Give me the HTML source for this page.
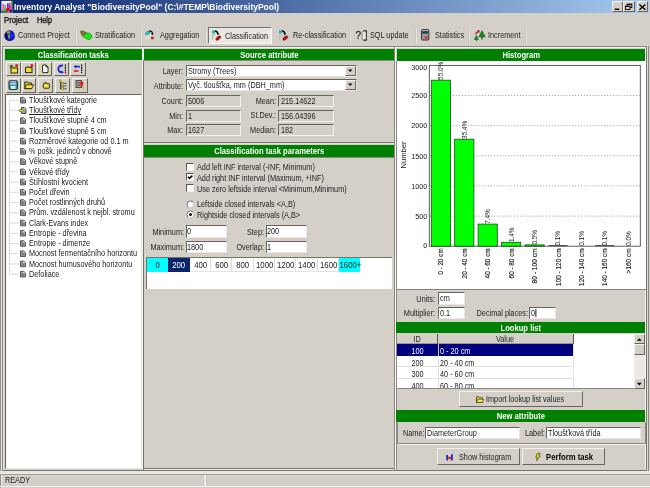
<!DOCTYPE html>
<html><head><meta charset="utf-8"><title>Inventory Analyst</title>
<style>
html,body{margin:0;padding:0;}
body{width:650px;height:488px;overflow:hidden;background:#d4d0c8;position:relative;
 font-family:"Liberation Sans","DejaVu Sans",sans-serif;font-size:9px;color:#222;line-height:11px;}
div,span{position:absolute;box-sizing:border-box;white-space:nowrap;}
.t{height:11px;line-height:11px;font-size:8.2px;transform:scaleX(.89);transform-origin:0 50%;}
.t.r{text-align:right;transform-origin:100% 50%;}
.t.c{text-align:center;transform-origin:50% 50%;}
.c{text-align:center;}
.hdr i{font-style:normal;display:inline-block;position:static;transform:scaleX(.93);transform-origin:50% 50%;}
.inp i{font-style:normal;display:inline-block;position:static;transform:scaleX(.89);transform-origin:0 50%;}
.hdr{background:#008000;color:#fff;font-weight:bold;text-align:center;height:12px;line-height:13.4px;font-size:8.2px;}
.sunk{border:1px solid;border-width:1.3px 1px 1px 1.3px;border-color:#66645e #f4f3f0 #f4f3f0 #66645e;}
.sunkw{background:#fff;border:1px solid;border-width:1.3px 1px 1px 1.3px;border-color:#66645e #e9e7e3 #e9e7e3 #66645e;}
.rais{border:1px solid;border-color:#f8f7f5 #68665f #68665f #f8f7f5;}
.frame{border:1px solid;border-color:#8a8880 #fbfaf9 #fbfaf9 #8a8880;}
.btn{border:1px solid;border-color:#f3f2ef #67655f #67655f #f3f2ef;background:#d4d0c8;}
.inp{padding-left:1.5px;line-height:11.2px;font-size:8.2px;}
svg{position:absolute;overflow:visible;}
</style></head><body><div id="w" style="left:0;top:0;width:650px;height:488px;will-change:transform;">

<div class="" style="left:0px;top:0px;width:650px;height:12.6px;background:linear-gradient(90deg,#0a246a 0%,#a6caf0 100%);"></div>
<div class="" style="left:648.5px;top:0px;width:1.5px;height:13px;background:#d4d0c8;"></div>
<svg style="left:0px;top:0px" width="14" height="13" viewBox="0 0 14 13">
<rect x="1.4" y="0.9" width="11.5" height="11.6" fill="#ecebf0"/>
<rect x="1.4" y="10.4" width="6" height="2.1" fill="#1c7c24"/>
<rect x="11.5" y="0.9" width="1.4" height="8.6" fill="#146c1c"/>
<rect x="2.4" y="3.8" width="1.7" height="6.4" fill="#e060d0"/>
<rect x="4.5" y="5" width="1.2" height="5.6" fill="#20a028"/>
<rect x="7" y="3.4" width="1.7" height="4.8" fill="#2434c0"/>
<rect x="9.1" y="2.6" width="1.6" height="3.6" fill="#e04848"/>
<rect x="9.4" y="9.4" width="3.2" height="3" fill="#141480"/>
<circle cx="9.4" cy="7.2" r="1.9" fill="#f010e0"/>
<circle cx="7.8" cy="9.8" r="2" fill="#f00014"/>
</svg>
<div class="t " style="left:14.2px;top:2.1px;color:#fff;font-weight:bold;font-size:8.9px;transform:scaleX(.956);">Inventory Analyst "BiodiversityPool" (C:\#TEMP\BiodiversityPool)</div>
<div class="btn" style="left:612.4px;top:1.4px;width:10.8px;height:10.4px;"></div>
<div class="btn" style="left:623.2px;top:1.4px;width:12.2px;height:10.4px;"></div>
<div class="btn" style="left:637px;top:1.4px;width:11.2px;height:10.4px;"></div>
<svg style="left:612px;top:0px" width="38" height="13" viewBox="0 0 38 13">
<rect x="2.7" y="8.5" width="4.6" height="1.5" fill="#000"/>
<rect x="15.2" y="4.2" width="4.6" height="3.4" fill="none" stroke="#000" stroke-width="0.9"/>
<rect x="15.2" y="3.9" width="4.6" height="1" fill="#000"/>
<rect x="13.4" y="6.2" width="4.6" height="3.2" fill="#d4d0c8" stroke="#000" stroke-width="0.9"/>
<rect x="13.4" y="5.9" width="4.6" height="1" fill="#000"/>
<path d="M27.4 4.4 L33.4 9.8 M33.4 4.4 L27.4 9.8" stroke="#000" stroke-width="1.4" fill="none"/>
</svg>
<div class="t " style="left:4px;top:15px;color:#000;-webkit-text-stroke:0.25px #000;transform:scaleX(.95);">Project</div>
<div class="t " style="left:37px;top:15px;color:#000;-webkit-text-stroke:0.25px #000;">Help</div>
<div class="t " style="left:18px;top:30px;">Connect Project</div>
<div class="" style="left:75px;top:29px;width:2px;height:15px;border-left:1px solid #c9c6be;border-right:1px solid #e6e4df;"></div>
<div class="t " style="left:94.7px;top:30px;">Stratification</div>
<div class="" style="left:140px;top:29px;width:2px;height:15px;border-left:1px solid #c9c6be;border-right:1px solid #e6e4df;"></div>
<div class="t " style="left:160px;top:30px;">Aggregation</div>
<div class="" style="left:205px;top:29px;width:2px;height:15px;border-left:1px solid #c9c6be;border-right:1px solid #e6e4df;"></div>
<div class="" style="left:207.5px;top:27.3px;width:64px;height:17px;border:1px solid;border-color:#77746d #fbfaf9 #fbfaf9 #77746d;background:#e9e7e2;"></div>
<div class="t " style="left:225px;top:30.5px;">Classification</div>
<div class="t " style="left:292.5px;top:30px;">Re-classification</div>
<div class="" style="left:349px;top:29px;width:2px;height:15px;border-left:1px solid #c9c6be;border-right:1px solid #e6e4df;"></div>
<div class="t " style="left:355.6px;top:29.8px;font-size:10px;color:#222;transform:none;-webkit-text-stroke:0.2px #222;">?</div>
<svg style="left:361px;top:29.5px" width="6.4" height="11" viewBox="0 0 6.4 11"><path d="M1.2 2.4 Q1.2 0.8 3.4 0.8 L5.4 0.8 L5.4 10.2 L3.4 10.2 Q1.2 10.2 1.2 8.6 Z" fill="#ecebe8" stroke="#555" stroke-width="0.6"/><path d="M5.3 1 L5.3 10" stroke="#111" stroke-width="0.9" stroke-dasharray="2.6 0.7"/><path d="M2.4 1 Q3.8 0.4 5.6 0.9 M2.4 10 Q3.8 10.6 5.6 10.1" stroke="#000" stroke-width="0.9" fill="none"/></svg>
<div class="t " style="left:370px;top:30px;">SQL update</div>
<div class="" style="left:415px;top:29px;width:2px;height:15px;border-left:1px solid #c9c6be;border-right:1px solid #e6e4df;"></div>
<div class="t " style="left:434.5px;top:30px;">Statistics</div>
<div class="" style="left:468px;top:29px;width:2px;height:15px;border-left:1px solid #c9c6be;border-right:1px solid #e6e4df;"></div>
<div class="t " style="left:488px;top:30px;">Increment</div>
<div class="" style="left:525px;top:29px;width:2px;height:15px;border-left:1px solid #c9c6be;border-right:1px solid #e6e4df;"></div>
<svg style="left:3.8px;top:29.5px" width="11.4" height="11.4" viewBox="0 0 11.4 11.4">
<defs><radialGradient id="gl" cx="0.68" cy="0.5" r="0.6"><stop offset="0" stop-color="#1838ff"/><stop offset="0.6" stop-color="#0a10c8"/><stop offset="1" stop-color="#060a70"/></radialGradient></defs>
<circle cx="5.7" cy="5.7" r="5.4" fill="url(#gl)"/>
<path d="M2.6 1.8 L4.2 1 L6.4 1.4 L6.2 3 L5 3.6 L4.2 4.4 L3 3.6 Z" fill="#9a9a20"/>
<path d="M3.8 4.8 L5.8 4.6 L6.2 6.4 L5.6 8.6 L4.8 9.4 L4.2 7.4 Z" fill="#9a9a20"/>
<path d="M9.8 2.8 L10.8 4.2 L10.9 6 L10 5.4 Z" fill="#8a8a28"/>
</svg>
<svg style="left:80px;top:30px" width="13" height="11" viewBox="0 0 13 11">
<path d="M0.3 1.4 L2.8 0.8 L7 3.2 L5.2 6 L2 5.6 Z" fill="#8a7a20" stroke="#3a4a10" stroke-width="0.6"/>
<path d="M3.4 6 Q4 3.5 7 3 Q10 2.5 11.5 5 Q12.4 7.5 10.5 9 Q8.5 10.2 7 9 Q5.6 7.6 4 7.6 Q3.2 7 3.4 6 Z" fill="#10ec10" stroke="#0a6a0a" stroke-width="0.6"/>
</svg>
<svg style="left:420.8px;top:29.3px" width="8.4" height="11.6" viewBox="0 0 8.4 11.6">
<rect x="0.5" y="0.5" width="7.4" height="10.6" rx="1.2" fill="#8e9898" stroke="#2a2a30" stroke-width="0.9"/>
<rect x="1.4" y="1.2" width="5.6" height="0.9" fill="#c4cccc"/>
<rect x="1.5" y="2.2" width="5.4" height="2.3" rx="0.6" fill="#0c2424"/>
<rect x="3.4" y="2.6" width="3" height="1.4" fill="#285050"/>
<rect x="1.6" y="5.4" width="5.2" height="1" fill="#a4acac"/>
<rect x="3.8" y="7.2" width="3.2" height="3.2" fill="#e04060"/>
</svg>
<svg style="left:473.5px;top:29.8px" width="12" height="11" viewBox="0 0 12 11">
<path d="M8 0.4 L11.4 7 L4.7 7 Z" fill="#0c8c14" stroke="#0a5a0e" stroke-width="0.4"/>
<rect x="7.5" y="7" width="1" height="2.4" fill="#101010"/>
<path d="M2.4 5.2 L4.6 9.4 L0.2 9.4 Z" fill="#0c8c14" stroke="#0a5a0e" stroke-width="0.4"/>
<rect x="1.9" y="9.4" width="1" height="1.4" fill="#103010"/>
<path d="M1.3 4 L3.8 2" stroke="#a01010" stroke-width="1.1"/>
<rect x="3.2" y="0.3" width="2.4" height="2.2" fill="#d01020"/>
</svg>

<svg style="left:145.3px;top:29.6px" width="11" height="11" viewBox="0 0 11 11">
<path d="M0.6 5 L5 2.4 L5.4 9.6 L0.6 9.6 Z" fill="#dddbd6"/>
<ellipse cx="2.9" cy="2.9" rx="3.1" ry="1.8" transform="rotate(-35 2.9 2.9)" fill="#189898"/>
<ellipse cx="2.6" cy="3.2" rx="1.5" ry="0.8" transform="rotate(-35 2.6 3.2)" fill="#40d8d0"/>
<path d="M4.6 1.3 Q7.3 0.8 7.4 3.6" stroke="#000" stroke-width="1.2" fill="none"/>
<path d="M6 3.3 L8.8 3.3 L7.4 5.3 Z" fill="#000"/>
<rect x="6.1" y="6.8" width="2.5" height="2.4" fill="#c81010"/>
</svg>
<svg style="left:211px;top:30px" width="11" height="11" viewBox="0 0 11 11">
<path d="M0.6 3 L4.6 3 L1.6 10 L0.6 10 Z" fill="#c4c2bc"/>
<rect x="1" y="0.4" width="3" height="2.8" fill="#18b8b0"/>
<path d="M4 1 Q6.8 1.2 6.9 4" stroke="#000" stroke-width="1.3" fill="none"/>
<path d="M5.5 3.4 L8.2 3.4 L6.9 5.2 Z" fill="#000"/>
<ellipse cx="7.3" cy="8.1" rx="2.9" ry="1.5" transform="rotate(-38 7.3 8.1)" fill="#d01010" stroke="#500000" stroke-width="0.5"/>
</svg>
<svg style="left:277.6px;top:29.8px" width="11" height="11" viewBox="0 0 11 11">
<path d="M0.6 3 L4.6 3 L1.6 10 L0.6 10 Z" fill="#c4c2bc"/>
<rect x="1" y="0.4" width="3" height="2.8" fill="#18b8b0"/>
<path d="M4 1 Q6.8 1.2 6.9 4" stroke="#000" stroke-width="1.3" fill="none"/>
<path d="M5.5 3.4 L8.2 3.4 L6.9 5.2 Z" fill="#000"/>
<ellipse cx="7.3" cy="8.1" rx="2.9" ry="1.5" transform="rotate(-38 7.3 8.1)" fill="#d01010" stroke="#500000" stroke-width="0.5"/>
</svg>
<div class="" style="left:2px;top:46px;width:646px;height:1px;background:#8a8880;"></div>
<div class="" style="left:3px;top:47px;width:644px;height:1px;background:#f1f0ed;"></div>
<div class="" style="left:2px;top:470px;width:646px;height:1px;background:#77746d;"></div>
<div class="" style="left:2px;top:46px;width:1px;height:425px;background:#8a8880;"></div>
<div class="" style="left:3px;top:47px;width:1px;height:423px;background:#e6e4e0;"></div>
<div class="" style="left:142px;top:47px;width:1px;height:423px;background:#f4f3f0;"></div>
<div class="" style="left:143px;top:60px;width:1px;height:411px;background:#77746d;"></div>
<div class="" style="left:143px;top:47px;width:1px;height:13px;background:#e9e7e3;"></div>
<div class="" style="left:394px;top:47px;width:1px;height:424px;background:#8a8880;"></div>
<div class="" style="left:395px;top:47px;width:1px;height:423px;background:#f8f7f5;"></div>
<div class="" style="left:396px;top:61px;width:1px;height:409px;background:#8a8880;"></div>
<div class="" style="left:645px;top:47px;width:1px;height:423px;background:#f1f0ed;"></div>
<div class="" style="left:646px;top:46px;width:1px;height:425px;background:#77746d;"></div>
<div class="" style="left:647px;top:46px;width:1px;height:425px;background:#e0ddd8;"></div>
<div class="" style="left:648px;top:46px;width:1px;height:425px;background:#8a8880;"></div>
<div class="" style="left:0px;top:13px;width:1px;height:475px;background:#96938c;"></div>
<div class="" style="left:1px;top:13px;width:1px;height:475px;background:#e6e4e0;"></div>
<div class="hdr" style="left:4.5px;top:49px;width:137px;height:11.3px;"><i>Classification tasks</i></div>
<div class="btn" style="left:5.8px;top:61.8px;width:14.8px;height:14.5px;"></div>
<div class="btn" style="left:21.2px;top:61.8px;width:14.8px;height:14.5px;"></div>
<div class="btn" style="left:37.4px;top:61.8px;width:14.8px;height:14.5px;"></div>
<div class="btn" style="left:54.4px;top:61.8px;width:14.8px;height:14.5px;"></div>
<div class="btn" style="left:70.2px;top:61.8px;width:15.6px;height:14.5px;"></div>
<div class="btn" style="left:6px;top:78.1px;width:14.8px;height:14.5px;"></div>
<div class="btn" style="left:21.6px;top:78.1px;width:14.8px;height:14.5px;"></div>
<div class="btn" style="left:38px;top:78.1px;width:14.8px;height:14.5px;"></div>
<div class="btn" style="left:54.8px;top:78.1px;width:14.8px;height:14.5px;"></div>
<div class="btn" style="left:71.5px;top:78.1px;width:16.2px;height:14.5px;"></div>
<svg style="left:7.80px;top:63.00px" width="12" height="12" viewBox="0 0 12 12"><rect x="3" y="5" width="6.6" height="5" fill="#e8e040" stroke="#201800" stroke-width="0.9"/><path d="M3 5 L4 4 L6 4 L6.6 5" fill="#e8e040" stroke="#201800" stroke-width="0.7"/><circle cx="8.6" cy="2.6" r="1.5" fill="#e81010"/><path d="M1.6 3 Q3 1 5 2.4 L4 4.4 L2 5 Z" fill="#4a5a30"/></svg>
<svg style="left:22.60px;top:63.00px" width="12" height="12" viewBox="0 0 12 12"><rect x="2.6" y="4.6" width="6.4" height="5" fill="#e8e040" stroke="#201800" stroke-width="0.9"/><path d="M2.6 4.6 L3.6 3.6 L5.6 3.6 L6.2 4.6" fill="#e8e040" stroke="#201800" stroke-width="0.7"/><circle cx="8.8" cy="2.6" r="1.5" fill="#e81010"/></svg>
<svg style="left:38.80px;top:63.00px" width="12" height="12" viewBox="0 0 12 12"><path d="M3.6 2 L7 2 L9 4 L9 9.6 L3.6 9.6 Z" fill="#fff" stroke="#181818" stroke-width="0.9"/><path d="M7 2 L7 4 L9 4" fill="none" stroke="#181818" stroke-width="0.7"/><g fill="#f0f040"><rect x="1.6" y="1" width="1.6" height="1.6"/><rect x="9.4" y="1" width="1.6" height="1.6"/><rect x="1.6" y="9.4" width="1.6" height="1.6"/><rect x="9.4" y="9.4" width="1.6" height="1.6"/><rect x="1.4" y="5" width="1.2" height="1.4"/><rect x="10" y="6" width="1.2" height="1.4"/></g></svg>
<svg style="left:56.40px;top:63.00px" width="12" height="12" viewBox="0 0 12 12"><path d="M7 2.6 Q2.4 2.2 2.4 5.8 Q2.4 9.4 6.2 9" stroke="#1828e0" stroke-width="1.9" fill="none"/><path d="M5.4 7.4 L8 9.2 L5.4 10.8 Z" fill="#1828e0"/><path d="M9.4 1.6 L9.4 9.4" stroke="#000" stroke-width="1.1" stroke-dasharray="1.6 0.9"/><rect x="8.8" y="8.6" width="1.4" height="1.8" fill="#e01010"/></svg>
<svg style="left:72.20px;top:63.00px" width="12" height="12" viewBox="0 0 12 12"><path d="M3.6 3.6 L8 3.6" stroke="#1828e0" stroke-width="1.5"/><path d="M1.6 3.6 L4.2 1.8 L4.2 5.4 Z" fill="#1828e0"/><path d="M2 8 L6.4 8" stroke="#e01010" stroke-width="1.5"/><path d="M9.6 1.6 L9.6 10" stroke="#000" stroke-width="1.2" stroke-dasharray="1.6 0.9"/></svg>
<svg style="left:7.40px;top:79.30px" width="12" height="12" viewBox="0 0 12 12"><rect x="2" y="1.8" width="8.4" height="8.6" rx="0.8" fill="#30a0a8" stroke="#101820" stroke-width="0.9"/><rect x="3.4" y="2.4" width="5.6" height="3" fill="#e8e8f0"/><rect x="3.4" y="3.4" width="5.6" height="0.8" fill="#5050c0"/><rect x="3.8" y="7" width="4.8" height="3" fill="#c8f0f0"/></svg>
<svg style="left:23.00px;top:79.30px" width="12" height="12" viewBox="0 0 12 12"><path d="M1.8 3 L4.4 3 L5.2 4 L8.6 4 L8.6 9.6 L1.8 9.6 Z" fill="#d8d038" stroke="#201800" stroke-width="0.9"/><path d="M1.8 9.6 L3.4 5.8 L10.8 5.8 L8.6 9.6 Z" fill="#f0e848" stroke="#201800" stroke-width="0.8"/></svg>
<svg style="left:40.20px;top:79.30px" width="12" height="12" viewBox="0 0 12 12"><rect x="3.4" y="4.6" width="6" height="4.6" rx="0.6" fill="#f0e848" stroke="#201800" stroke-width="0.9"/><path d="M3.6 4.6 L4.4 3.6 L6.2 3.6 L6.8 4.6" fill="#f0e848" stroke="#201800" stroke-width="0.7"/></svg>
<svg style="left:56.80px;top:79.30px" width="12" height="12" viewBox="0 0 12 12"><path d="M3.4 2 L3.4 10 M3.4 4.4 L9.6 4.4 M3.4 7 L9.6 7 M3.4 9.8 L9.6 9.8" stroke="#303030" stroke-width="0.8" fill="none"/><g fill="#e8e040" stroke="#403800" stroke-width="0.3"><rect x="2.4" y="1" width="2" height="2"/><rect x="4.4" y="3.6" width="1.8" height="1.8"/><rect x="4.4" y="6.2" width="1.8" height="1.8"/><rect x="4.4" y="8.8" width="1.8" height="1.8"/></g></svg>
<svg style="left:73.70px;top:79.30px" width="12" height="12" viewBox="0 0 12 12"><rect x="2" y="1.6" width="5.4" height="7" fill="#b0b0b0" stroke="#303030" stroke-width="0.8"/><path d="M3 3.4 L6.4 3.4 M3 5 L6.4 5 M3 6.6 L6.4 6.6" stroke="#404040" stroke-width="0.7"/><path d="M7.6 1.4 L10 4.6 L8.8 4.6 L8.8 7.4 L6.6 7.4 L6.6 4.6 L5.6 4.6 Z" fill="#e01010"/><path d="M4.6 9.4 L5.6 9.4 L5.6 11 M9 8 L9.8 8 L9.8 11" stroke="#c8c020" stroke-width="1" fill="none"/></svg>
<div class="sunkw" style="left:4.5px;top:94px;width:137px;height:375px;"></div>
<svg style="left:0;top:0" width="650" height="488"><g stroke="#d6d6d6" stroke-width="0.9" fill="none">
<path d="M9.5 100.4 L9.5 274.4"/>
<path d="M9.5 100.2 L19 100.2"/>
<path d="M9.5 110.4 L19 110.4"/>
<path d="M9.5 120.7 L19 120.7"/>
<path d="M9.5 130.9 L19 130.9"/>
<path d="M9.5 141.1 L19 141.1"/>
<path d="M9.5 151.4 L19 151.4"/>
<path d="M9.5 161.6 L19 161.6"/>
<path d="M9.5 171.8 L19 171.8"/>
<path d="M9.5 182.1 L19 182.1"/>
<path d="M9.5 192.3 L19 192.3"/>
<path d="M9.5 202.6 L19 202.6"/>
<path d="M9.5 212.8 L19 212.8"/>
<path d="M9.5 223.0 L19 223.0"/>
<path d="M9.5 233.3 L19 233.3"/>
<path d="M9.5 243.5 L19 243.5"/>
<path d="M9.5 253.7 L19 253.7"/>
<path d="M9.5 264.0 L19 264.0"/>
<path d="M9.5 274.2 L19 274.2"/>
</g>
<g transform="translate(20.1,97.00)"><path d="M0.4 0.4 L3.6 0.4 L5.4 2 L5.4 6 L0.4 6 Z" fill="#a4a4a4" stroke="#3c3c3c" stroke-width="0.8"/><path d="M3.4 0.8 L3.4 2.2 L5 2.2 Z" fill="#fff"/><path d="M1.4 2.2 L2.8 2.2 M1.4 3.4 L4.4 3.4 M1.4 4.6 L4.4 4.6" stroke="#505050" stroke-width="0.6"/></g>
<g transform="translate(19,107.04)"><path d="M2.4 0.4 L5.4 0.4 L7 2 L7 6.4 L2.4 6.4 Z" fill="#a4a4a4" stroke="#2c2c2c" stroke-width="0.8"/><path d="M5.2 0.8 L5.2 2.2 L6.6 2.2 Z" fill="#fff"/><path d="M0.2 2.8 L2.6 2.8 L2.6 1.4 L4.8 3.6 L2.6 5.8 L2.6 4.4 L0.2 4.4 Z" fill="#d8e030" stroke="#405010" stroke-width="0.5"/></g>
<g transform="translate(20.1,117.47)"><path d="M0.4 0.4 L3.6 0.4 L5.4 2 L5.4 6 L0.4 6 Z" fill="#a4a4a4" stroke="#3c3c3c" stroke-width="0.8"/><path d="M3.4 0.8 L3.4 2.2 L5 2.2 Z" fill="#fff"/><path d="M1.4 2.2 L2.8 2.2 M1.4 3.4 L4.4 3.4 M1.4 4.6 L4.4 4.6" stroke="#505050" stroke-width="0.6"/></g>
<g transform="translate(20.1,127.71)"><path d="M0.4 0.4 L3.6 0.4 L5.4 2 L5.4 6 L0.4 6 Z" fill="#a4a4a4" stroke="#3c3c3c" stroke-width="0.8"/><path d="M3.4 0.8 L3.4 2.2 L5 2.2 Z" fill="#fff"/><path d="M1.4 2.2 L2.8 2.2 M1.4 3.4 L4.4 3.4 M1.4 4.6 L4.4 4.6" stroke="#505050" stroke-width="0.6"/></g>
<g transform="translate(20.1,137.94)"><path d="M0.4 0.4 L3.6 0.4 L5.4 2 L5.4 6 L0.4 6 Z" fill="#a4a4a4" stroke="#3c3c3c" stroke-width="0.8"/><path d="M3.4 0.8 L3.4 2.2 L5 2.2 Z" fill="#fff"/><path d="M1.4 2.2 L2.8 2.2 M1.4 3.4 L4.4 3.4 M1.4 4.6 L4.4 4.6" stroke="#505050" stroke-width="0.6"/></g>
<g transform="translate(20.1,148.17)"><path d="M0.4 0.4 L3.6 0.4 L5.4 2 L5.4 6 L0.4 6 Z" fill="#a4a4a4" stroke="#3c3c3c" stroke-width="0.8"/><path d="M3.4 0.8 L3.4 2.2 L5 2.2 Z" fill="#fff"/><path d="M1.4 2.2 L2.8 2.2 M1.4 3.4 L4.4 3.4 M1.4 4.6 L4.4 4.6" stroke="#505050" stroke-width="0.6"/></g>
<g transform="translate(20.1,158.41)"><path d="M0.4 0.4 L3.6 0.4 L5.4 2 L5.4 6 L0.4 6 Z" fill="#a4a4a4" stroke="#3c3c3c" stroke-width="0.8"/><path d="M3.4 0.8 L3.4 2.2 L5 2.2 Z" fill="#fff"/><path d="M1.4 2.2 L2.8 2.2 M1.4 3.4 L4.4 3.4 M1.4 4.6 L4.4 4.6" stroke="#505050" stroke-width="0.6"/></g>
<g transform="translate(20.1,168.65)"><path d="M0.4 0.4 L3.6 0.4 L5.4 2 L5.4 6 L0.4 6 Z" fill="#a4a4a4" stroke="#3c3c3c" stroke-width="0.8"/><path d="M3.4 0.8 L3.4 2.2 L5 2.2 Z" fill="#fff"/><path d="M1.4 2.2 L2.8 2.2 M1.4 3.4 L4.4 3.4 M1.4 4.6 L4.4 4.6" stroke="#505050" stroke-width="0.6"/></g>
<g transform="translate(20.1,178.88)"><path d="M0.4 0.4 L3.6 0.4 L5.4 2 L5.4 6 L0.4 6 Z" fill="#a4a4a4" stroke="#3c3c3c" stroke-width="0.8"/><path d="M3.4 0.8 L3.4 2.2 L5 2.2 Z" fill="#fff"/><path d="M1.4 2.2 L2.8 2.2 M1.4 3.4 L4.4 3.4 M1.4 4.6 L4.4 4.6" stroke="#505050" stroke-width="0.6"/></g>
<g transform="translate(20.1,189.11)"><path d="M0.4 0.4 L3.6 0.4 L5.4 2 L5.4 6 L0.4 6 Z" fill="#a4a4a4" stroke="#3c3c3c" stroke-width="0.8"/><path d="M3.4 0.8 L3.4 2.2 L5 2.2 Z" fill="#fff"/><path d="M1.4 2.2 L2.8 2.2 M1.4 3.4 L4.4 3.4 M1.4 4.6 L4.4 4.6" stroke="#505050" stroke-width="0.6"/></g>
<g transform="translate(20.1,199.35)"><path d="M0.4 0.4 L3.6 0.4 L5.4 2 L5.4 6 L0.4 6 Z" fill="#a4a4a4" stroke="#3c3c3c" stroke-width="0.8"/><path d="M3.4 0.8 L3.4 2.2 L5 2.2 Z" fill="#fff"/><path d="M1.4 2.2 L2.8 2.2 M1.4 3.4 L4.4 3.4 M1.4 4.6 L4.4 4.6" stroke="#505050" stroke-width="0.6"/></g>
<g transform="translate(20.1,209.59)"><path d="M0.4 0.4 L3.6 0.4 L5.4 2 L5.4 6 L0.4 6 Z" fill="#a4a4a4" stroke="#3c3c3c" stroke-width="0.8"/><path d="M3.4 0.8 L3.4 2.2 L5 2.2 Z" fill="#fff"/><path d="M1.4 2.2 L2.8 2.2 M1.4 3.4 L4.4 3.4 M1.4 4.6 L4.4 4.6" stroke="#505050" stroke-width="0.6"/></g>
<g transform="translate(20.1,219.82)"><path d="M0.4 0.4 L3.6 0.4 L5.4 2 L5.4 6 L0.4 6 Z" fill="#a4a4a4" stroke="#3c3c3c" stroke-width="0.8"/><path d="M3.4 0.8 L3.4 2.2 L5 2.2 Z" fill="#fff"/><path d="M1.4 2.2 L2.8 2.2 M1.4 3.4 L4.4 3.4 M1.4 4.6 L4.4 4.6" stroke="#505050" stroke-width="0.6"/></g>
<g transform="translate(20.1,230.06)"><path d="M0.4 0.4 L3.6 0.4 L5.4 2 L5.4 6 L0.4 6 Z" fill="#a4a4a4" stroke="#3c3c3c" stroke-width="0.8"/><path d="M3.4 0.8 L3.4 2.2 L5 2.2 Z" fill="#fff"/><path d="M1.4 2.2 L2.8 2.2 M1.4 3.4 L4.4 3.4 M1.4 4.6 L4.4 4.6" stroke="#505050" stroke-width="0.6"/></g>
<g transform="translate(20.1,240.29)"><path d="M0.4 0.4 L3.6 0.4 L5.4 2 L5.4 6 L0.4 6 Z" fill="#a4a4a4" stroke="#3c3c3c" stroke-width="0.8"/><path d="M3.4 0.8 L3.4 2.2 L5 2.2 Z" fill="#fff"/><path d="M1.4 2.2 L2.8 2.2 M1.4 3.4 L4.4 3.4 M1.4 4.6 L4.4 4.6" stroke="#505050" stroke-width="0.6"/></g>
<g transform="translate(20.1,250.52)"><path d="M0.4 0.4 L3.6 0.4 L5.4 2 L5.4 6 L0.4 6 Z" fill="#a4a4a4" stroke="#3c3c3c" stroke-width="0.8"/><path d="M3.4 0.8 L3.4 2.2 L5 2.2 Z" fill="#fff"/><path d="M1.4 2.2 L2.8 2.2 M1.4 3.4 L4.4 3.4 M1.4 4.6 L4.4 4.6" stroke="#505050" stroke-width="0.6"/></g>
<g transform="translate(20.1,260.76)"><path d="M0.4 0.4 L3.6 0.4 L5.4 2 L5.4 6 L0.4 6 Z" fill="#a4a4a4" stroke="#3c3c3c" stroke-width="0.8"/><path d="M3.4 0.8 L3.4 2.2 L5 2.2 Z" fill="#fff"/><path d="M1.4 2.2 L2.8 2.2 M1.4 3.4 L4.4 3.4 M1.4 4.6 L4.4 4.6" stroke="#505050" stroke-width="0.6"/></g>
<g transform="translate(20.1,271.00)"><path d="M0.4 0.4 L3.6 0.4 L5.4 2 L5.4 6 L0.4 6 Z" fill="#a4a4a4" stroke="#3c3c3c" stroke-width="0.8"/><path d="M3.4 0.8 L3.4 2.2 L5 2.2 Z" fill="#fff"/><path d="M1.4 2.2 L2.8 2.2 M1.4 3.4 L4.4 3.4 M1.4 4.6 L4.4 4.6" stroke="#505050" stroke-width="0.6"/></g>
</svg>
<div class="t " style="left:29px;top:94.9px;">Tloušťkové kategorie</div>
<div class="t " style="left:29px;top:105.14px;text-decoration:underline;">Tloušťkové třídy</div>
<div class="t " style="left:29px;top:115.37px;">Tloušťkové stupně 4 cm</div>
<div class="t " style="left:29px;top:125.61px;">Tloušťkové stupně 5 cm</div>
<div class="t " style="left:29px;top:135.84px;">Rozměrové kategorie od 0.1 m</div>
<div class="t " style="left:29px;top:146.07px;">% pošk. jedinců v obnově</div>
<div class="t " style="left:29px;top:156.31px;">Věkové stupně</div>
<div class="t " style="left:29px;top:166.55px;">Věkové třídy</div>
<div class="t " style="left:29px;top:176.78px;">Štíhlostní kvocient</div>
<div class="t " style="left:29px;top:187.01px;">Počet dřevin</div>
<div class="t " style="left:29px;top:197.25px;">Počet rostlinných druhů</div>
<div class="t " style="left:29px;top:207.49px;">Prům. vzdálenost k nejbl. stromu</div>
<div class="t " style="left:29px;top:217.72px;">Clark-Evans index</div>
<div class="t " style="left:29px;top:227.96px;">Entropie - dřevina</div>
<div class="t " style="left:29px;top:238.19px;">Entropie - dimenze</div>
<div class="t " style="left:29px;top:248.42px;">Mocnost fermentačního horizontu</div>
<div class="t " style="left:29px;top:258.66px;">Mocnost humusového horizontu</div>
<div class="t " style="left:29px;top:268.89px;">Defoliace</div>
<div class="hdr" style="left:144px;top:49px;width:250.4px;height:11.3px;"><i>Source attribute</i></div>
<div class="" style="left:143px;top:60.3px;width:251px;height:1px;background:#8a8880;"></div>
<div class="" style="left:143px;top:156.5px;width:251px;height:1px;background:#8a8880;"></div>
<div class="" style="left:144px;top:468px;width:250px;height:1px;background:#77746d;"></div>
<div class="" style="left:144px;top:469px;width:250px;height:1px;background:#f1f0ed;"></div>
<div class="" style="left:144px;top:142px;width:250px;height:1px;background:#77746d;"></div>
<div class="" style="left:144px;top:143px;width:250px;height:1px;background:#e6e4e0;"></div>
<div class="t r" style="left:142.8px;top:66.2px;width:40px;">Layer:</div>
<div class="sunkw inp" style="left:185.5px;top:65.3px;width:171px;height:11.6px;"><i>Stromy (Trees)</i></div>
<div class="btn" style="left:345.3px;top:66.3px;width:10.4px;height:9.6px;"></div>
<svg style="left:345.3px;top:66.3px" width="10.4" height="9.6"><path d="M3 3.6 L7.4 3.6 L5.2 6 Z" fill="#000"/></svg>
<div class="t r" style="left:142.8px;top:80.5px;width:40px;">Attribute:</div>
<div class="sunkw inp" style="left:185.5px;top:79.2px;width:171px;height:11.6px;"><i>Vyč. tloušťka, mm (DBH_mm)</i></div>
<div class="btn" style="left:345.3px;top:80.2px;width:10.4px;height:9.6px;"></div>
<svg style="left:345.3px;top:80.2px" width="10.4" height="9.6"><path d="M3 3.6 L7.4 3.6 L5.2 6 Z" fill="#000"/></svg>
<div class="t r" style="left:142.8px;top:96.2px;width:40px;">Count:</div>
<div class="sunk inp" style="left:185.5px;top:95.2px;width:55.5px;height:12px;"><i>5006</i></div>
<div class="t r" style="left:142.8px;top:110.60000000000001px;width:40px;">Min:</div>
<div class="sunk inp" style="left:185.5px;top:109.60000000000001px;width:55.5px;height:12px;"><i>1</i></div>
<div class="t r" style="left:142.8px;top:125.0px;width:40px;">Max:</div>
<div class="sunk inp" style="left:185.5px;top:124.0px;width:55.5px;height:12px;"><i>1627</i></div>
<div class="t r" style="left:225px;top:96.0px;width:51px;">Mean:</div>
<div class="sunk inp" style="left:278px;top:95.2px;width:55.5px;height:12px;"><i>215.14622</i></div>
<div class="t r" style="left:225px;top:110.4px;width:51px;">St.Dev.:</div>
<div class="sunk inp" style="left:278px;top:109.60000000000001px;width:55.5px;height:12px;"><i>156.04396</i></div>
<div class="t r" style="left:225px;top:124.8px;width:51px;">Median:</div>
<div class="sunk inp" style="left:278px;top:124.0px;width:55.5px;height:12px;"><i>182</i></div>
<div class="hdr" style="left:144px;top:145px;width:250.4px;height:11.5px;"><i>Classification task parameters</i></div>
<div class="" style="left:186px;top:162.6px;width:8px;height:8.1px;background:#fff;border:1px solid;border-width:1.3px 1px 1px 1.3px;border-color:#5a5853 #f1f0ed #f1f0ed #5a5853;"></div>
<div class="t " style="left:196.8px;top:162.0px;">Add left INF interval (-INF, Minimum)</div>
<div class="" style="left:186px;top:173.3px;width:8px;height:8.1px;background:#fff;border:1px solid;border-width:1.3px 1px 1px 1.3px;border-color:#5a5853 #f1f0ed #f1f0ed #5a5853;"></div>
<svg style="left:186px;top:173.3px" width="9" height="9"><path d="M2 3.8 L3.5 5.4 L6.4 2.6" stroke="#000" stroke-width="1.6" fill="none"/></svg>
<div class="t " style="left:196.8px;top:172.9px;">Add right INF interval (Maximum, +INF)</div>
<div class="" style="left:186px;top:184.2px;width:8px;height:8.1px;background:#fff;border:1px solid;border-width:1.3px 1px 1px 1.3px;border-color:#5a5853 #f1f0ed #f1f0ed #5a5853;"></div>
<div class="t " style="left:196.8px;top:183.70000000000002px;">Use zero leftside interval &lt;Minimum,Minimum)</div>
<svg style="left:185.5px;top:199.8px" width="9" height="9"><circle cx="4.5" cy="4.5" r="3.5" fill="#fff" stroke="#77746d" stroke-width="1"/><path d="M2 7 A3.5 3.5 0 0 0 7 2" stroke="#e9e7e3" stroke-width="1" fill="none"/></svg>
<div class="t " style="left:196.8px;top:199.10000000000002px;">Leftside closed intervals &lt;A,B)</div>
<svg style="left:185.5px;top:210.2px" width="9" height="9"><circle cx="4.5" cy="4.5" r="3.5" fill="#fff" stroke="#77746d" stroke-width="1"/><path d="M2 7 A3.5 3.5 0 0 0 7 2" stroke="#e9e7e3" stroke-width="1" fill="none"/><circle cx="4.5" cy="4.5" r="1.5" fill="#000"/></svg>
<div class="t " style="left:196.8px;top:209.89999999999998px;">Rightside closed intervals (A,B&gt;</div>
<div class="t r" style="left:143.5px;top:227px;width:40px;">Minimum:</div>
<div class="sunkw inp" style="left:185.6px;top:225.2px;width:41.5px;height:12.6px;padding-left:0.7px;"><i>0</i></div>
<div class="t r" style="left:143.5px;top:241.8px;width:40px;">Maximum:</div>
<div class="sunkw inp" style="left:185.6px;top:240.5px;width:41.5px;height:12.2px;padding-left:0.7px;"><i>1800</i></div>
<div class="t r" style="left:223.5px;top:227px;width:40px;">Step:</div>
<div class="sunkw inp" style="left:265.7px;top:225.2px;width:41.5px;height:12.6px;padding-left:0.7px;"><i>200</i></div>
<div class="t r" style="left:223.5px;top:241.8px;width:40px;">Overlap:</div>
<div class="sunkw inp" style="left:265.7px;top:240.5px;width:41.5px;height:12.2px;padding-left:0.7px;"><i>1</i></div>
<div class="" style="left:146px;top:257px;width:246px;height:32px;background:#fff;border-top:1px solid #77746d;border-left:1px solid #77746d;"></div>
<div class="" style="left:147.0px;top:258px;width:21.33px;height:14px;border-right:1px solid #dcdcdc;border-bottom:1px solid #e4e4e4;background:#00ffff;border-color:#00ffff;"><div class="t c" style="left:0;top:2.1px;width:21.33px;font-size:8.2px;transform:scaleX(.95);color:#222">0</div></div>
<div class="" style="left:168.33px;top:258px;width:21.33px;height:14px;border-right:1px solid #dcdcdc;border-bottom:1px solid #e4e4e4;background:#0a246a;border-color:#0a246a;"><div class="t c" style="left:0;top:2.1px;width:21.33px;font-size:8.2px;transform:scaleX(.95);color:#fff">200</div></div>
<div class="" style="left:189.66px;top:258px;width:21.33px;height:14px;border-right:1px solid #dcdcdc;border-bottom:1px solid #e4e4e4;"><div class="t c" style="left:0;top:2.1px;width:21.33px;font-size:8.2px;transform:scaleX(.95);color:#222">400</div></div>
<div class="" style="left:210.99px;top:258px;width:21.33px;height:14px;border-right:1px solid #dcdcdc;border-bottom:1px solid #e4e4e4;"><div class="t c" style="left:0;top:2.1px;width:21.33px;font-size:8.2px;transform:scaleX(.95);color:#222">600</div></div>
<div class="" style="left:232.32px;top:258px;width:21.33px;height:14px;border-right:1px solid #dcdcdc;border-bottom:1px solid #e4e4e4;"><div class="t c" style="left:0;top:2.1px;width:21.33px;font-size:8.2px;transform:scaleX(.95);color:#222">800</div></div>
<div class="" style="left:253.65px;top:258px;width:21.33px;height:14px;border-right:1px solid #dcdcdc;border-bottom:1px solid #e4e4e4;"><div class="t c" style="left:0;top:2.1px;width:21.33px;font-size:8.2px;transform:scaleX(.95);color:#222">1000</div></div>
<div class="" style="left:274.98px;top:258px;width:21.33px;height:14px;border-right:1px solid #dcdcdc;border-bottom:1px solid #e4e4e4;"><div class="t c" style="left:0;top:2.1px;width:21.33px;font-size:8.2px;transform:scaleX(.95);color:#222">1200</div></div>
<div class="" style="left:296.31px;top:258px;width:21.33px;height:14px;border-right:1px solid #dcdcdc;border-bottom:1px solid #e4e4e4;"><div class="t c" style="left:0;top:2.1px;width:21.33px;font-size:8.2px;transform:scaleX(.95);color:#222">1400</div></div>
<div class="" style="left:317.64px;top:258px;width:21.33px;height:14px;border-right:1px solid #dcdcdc;border-bottom:1px solid #e4e4e4;"><div class="t c" style="left:0;top:2.1px;width:21.33px;font-size:8.2px;transform:scaleX(.95);color:#222">1600</div></div>
<div class="" style="left:338.97px;top:258px;width:21.33px;height:14px;border-right:1px solid #dcdcdc;border-bottom:1px solid #e4e4e4;background:#00ffff;border-color:#00ffff;"><div class="t c" style="left:0;top:2.1px;width:21.33px;font-size:8.2px;transform:scaleX(.95);color:#222">1600+</div></div>
<div class="hdr" style="left:397px;top:49px;width:248px;height:12px;"><i>Histogram</i></div>
<div class="" style="left:397px;top:61px;width:248.6px;height:228px;background:#fff;"></div>
<div class="" style="left:397px;top:289px;width:249px;height:1px;background:#85827b;"></div>
<svg style="left:0;top:0" width="650" height="488" font-family="Liberation Sans, sans-serif" font-size="7.3" fill="#222">
<path d="M430 216.1 L640 216.1" stroke="#8a8a8a" stroke-width="0.8" stroke-dasharray="1.1 1.8"/>
<path d="M430 185.9 L640 185.9" stroke="#8a8a8a" stroke-width="0.8" stroke-dasharray="1.1 1.8"/>
<path d="M430 155.8 L640 155.8" stroke="#8a8a8a" stroke-width="0.8" stroke-dasharray="1.1 1.8"/>
<path d="M430 125.7 L640 125.7" stroke="#8a8a8a" stroke-width="0.8" stroke-dasharray="1.1 1.8"/>
<path d="M430 95.5 L640 95.5" stroke="#8a8a8a" stroke-width="0.8" stroke-dasharray="1.1 1.8"/>
<text x="427.4" y="247.6" text-anchor="end">0</text>
<text x="427.4" y="218.8" text-anchor="end">500</text>
<text x="427.4" y="188.6" text-anchor="end">1000</text>
<text x="427.4" y="158.5" text-anchor="end">1500</text>
<text x="427.4" y="128.4" text-anchor="end">2000</text>
<text x="427.4" y="98.2" text-anchor="end">2500</text>
<text x="427.4" y="69.8" text-anchor="end">3000</text>
<rect x="429.3" y="65.4" width="211" height="180.8" fill="none" stroke="#4a4a4a" stroke-width="0.9"/>
<rect x="431.3" y="80.2" width="19.2" height="166.0" fill="#00ff00" stroke="#1a4a1a" stroke-width="0.8"/>
<text transform="translate(443.2,79.9) rotate(-90)" font-size="7.2" textLength="18" lengthAdjust="spacingAndGlyphs">55.0%</text>
<text transform="translate(443.4,274.4) rotate(-90)" font-size="7.8" stroke="#222" stroke-width="0.15" textLength="26" lengthAdjust="spacingAndGlyphs">0 - 20 cm</text>
<rect x="454.7" y="139.2" width="19.2" height="107.0" fill="#00ff00" stroke="#1a4a1a" stroke-width="0.8"/>
<text transform="translate(466.6,138.9) rotate(-90)" font-size="7.2" textLength="18" lengthAdjust="spacingAndGlyphs">35.4%</text>
<text transform="translate(466.8,278.4) rotate(-90)" font-size="7.8" stroke="#222" stroke-width="0.15" textLength="30" lengthAdjust="spacingAndGlyphs">20 - 40 cm</text>
<rect x="478.1" y="224.1" width="19.2" height="22.1" fill="#00ff00" stroke="#1a4a1a" stroke-width="0.8"/>
<text transform="translate(490.0,223.8) rotate(-90)" font-size="7.2" textLength="14.5" lengthAdjust="spacingAndGlyphs">7.4%</text>
<text transform="translate(490.2,278.4) rotate(-90)" font-size="7.8" stroke="#222" stroke-width="0.15" textLength="30" lengthAdjust="spacingAndGlyphs">40 - 60 cm</text>
<rect x="501.6" y="242.3" width="19.2" height="3.9" fill="#00ff00" stroke="#1a4a1a" stroke-width="0.8"/>
<text transform="translate(513.5,242.0) rotate(-90)" font-size="7.2" textLength="14.5" lengthAdjust="spacingAndGlyphs">1.4%</text>
<text transform="translate(513.7,278.4) rotate(-90)" font-size="7.8" stroke="#222" stroke-width="0.15" textLength="30" lengthAdjust="spacingAndGlyphs">60 - 80 cm</text>
<rect x="525.0" y="244.9" width="19.2" height="1.3" fill="#00ff00" stroke="#1a4a1a" stroke-width="0.8"/>
<text transform="translate(536.9,244.6) rotate(-90)" font-size="7.2" textLength="14.5" lengthAdjust="spacingAndGlyphs">0.5%</text>
<text transform="translate(537.1,283.4) rotate(-90)" font-size="7.8" stroke="#222" stroke-width="0.15" textLength="35" lengthAdjust="spacingAndGlyphs">80 - 100 cm</text>
<path d="M548.4 245.7 L567.6 245.7" stroke="#3a3a3a" stroke-width="1"/>
<text transform="translate(560.3,245.5) rotate(-90)" font-size="7.2" textLength="14.5" lengthAdjust="spacingAndGlyphs">0.1%</text>
<text transform="translate(560.5,285.9) rotate(-90)" font-size="7.8" stroke="#222" stroke-width="0.15" textLength="37.5" lengthAdjust="spacingAndGlyphs">100 - 120 cm</text>
<text transform="translate(583.7,245.7) rotate(-90)" font-size="7.2" textLength="14.5" lengthAdjust="spacingAndGlyphs">0.1%</text>
<text transform="translate(583.9,285.9) rotate(-90)" font-size="7.8" stroke="#222" stroke-width="0.15" textLength="37.5" lengthAdjust="spacingAndGlyphs">120 - 140 cm</text>
<path d="M595.2 245.7 L614.4 245.7" stroke="#3a3a3a" stroke-width="1"/>
<text transform="translate(607.1,245.5) rotate(-90)" font-size="7.2" textLength="14.5" lengthAdjust="spacingAndGlyphs">0.1%</text>
<text transform="translate(607.3,285.9) rotate(-90)" font-size="7.8" stroke="#222" stroke-width="0.15" textLength="37.5" lengthAdjust="spacingAndGlyphs">140 - 160 cm</text>
<text transform="translate(630.6,245.8) rotate(-90)" font-size="7.2" textLength="14.5" lengthAdjust="spacingAndGlyphs">0.0%</text>
<text transform="translate(630.8,273.4) rotate(-90)" font-size="7.8" stroke="#222" stroke-width="0.15" textLength="25" lengthAdjust="spacingAndGlyphs">&gt;160 cm</text>
<text transform="translate(406.1,155) rotate(-90)" text-anchor="middle" font-size="7.6">Number</text>
</svg>
<div class="t r" style="left:395.2px;top:293.8px;width:40px;">Units:</div>
<div class="sunkw inp" style="left:438.2px;top:292.4px;width:27px;height:12.2px;padding-left:0.7px;"><i>cm</i></div>
<div class="t r" style="left:395.2px;top:308px;width:40px;">Multiplier:</div>
<div class="sunkw inp" style="left:438.2px;top:307.2px;width:27px;height:12.2px;padding-left:0.7px;"><i>0.1</i></div>
<div class="t r" style="left:466.6px;top:308px;width:61px;">Decimal places:</div>
<div class="sunkw inp" style="left:529px;top:307.2px;width:27px;height:12.2px;padding-left:0.7px;"><i>0<span style="position:static;display:inline-block;width:1px;height:8px;background:#000;vertical-align:-1px"></span></i></div>
<div class="hdr" style="left:396.3px;top:322px;width:249px;height:11.3px;"><i>Lookup list</i></div>
<div class="" style="left:397px;top:333.5px;width:248px;height:55.5px;background:#fff;border-bottom:1px solid #8a8880;"></div>
<div class="" style="left:397px;top:333.5px;width:41px;height:10.6px;background:#d4d0c8;border-right:1px solid #55534e;border-bottom:1px solid #9a978f;"><div class="t c" style="left:0;top:0.3px;width:40px;">ID</div></div>
<div class="" style="left:438px;top:333.5px;width:135.5px;height:10.6px;background:#d4d0c8;border-right:1px solid #55534e;border-bottom:1px solid #9a978f;"><div class="t c" style="left:0;top:0.3px;width:134px;">Value</div></div>
<div class="" style="left:397px;top:344.2px;width:176.5px;height:11.65px;background:#000080;overflow:hidden;"><div class="t c" style="left:0;top:1.7px;width:41px;color:#fff">100</div><div class="t" style="left:43.3px;top:1.7px;color:#fff">0 - 20 cm</div><div style="left:40.5px;top:0;width:1px;height:12px;background:#d4d0c8"></div></div>
<div class="" style="left:397px;top:355.85px;width:176.5px;height:11.65px;border-bottom:1px solid #e0e0e0;overflow:hidden;"><div class="t c" style="left:0;top:1.7px;width:41px;color:#222">200</div><div class="t" style="left:43.3px;top:1.7px;color:#222">20 - 40 cm</div><div style="left:40.5px;top:0;width:1px;height:12px;background:#dcdcdc"></div></div>
<div class="" style="left:397px;top:367.5px;width:176.5px;height:11.65px;border-bottom:1px solid #e0e0e0;overflow:hidden;"><div class="t c" style="left:0;top:1.7px;width:41px;color:#222">300</div><div class="t" style="left:43.3px;top:1.7px;color:#222">40 - 60 cm</div><div style="left:40.5px;top:0;width:1px;height:12px;background:#dcdcdc"></div></div>
<div class="" style="left:397px;top:379.15px;width:176.5px;height:9.3px;overflow:hidden;"><div class="t c" style="left:0;top:1.7px;width:41px;color:#222">400</div><div class="t" style="left:43.3px;top:1.7px;color:#222">60 - 80 cm</div><div style="left:40.5px;top:0;width:1px;height:12px;background:#dcdcdc"></div></div>
<div class="" style="left:573px;top:344.2px;width:1px;height:44px;background:#e4e4e4;"></div>
<div class="" style="left:634px;top:333.5px;width:10.6px;height:55px;background:#eceae6;"></div>
<div class="btn" style="left:634px;top:333.5px;width:10.6px;height:10.8px;"></div>
<div class="btn" style="left:634px;top:344.4px;width:10.6px;height:10.8px;"></div>
<div class="btn" style="left:634px;top:378.2px;width:10.6px;height:10.4px;"></div>
<svg style="left:634px;top:333.5px" width="11" height="55"><path d="M2.9 6.8 L7.7 6.8 L5.3 4.2 Z" fill="#000"/><path d="M2.9 48.8 L7.7 48.8 L5.3 51.4 Z" fill="#000"/></svg>
<div class="btn" style="left:459.3px;top:391.2px;width:123.6px;height:16px;"></div>
<svg style="left:476.4px;top:395.6px" width="8" height="7" viewBox="0 0 8 7"><path d="M0.5 0.8 L2.8 0.8 L3.5 1.7 L6.4 1.7 L6.4 6.5 L0.5 6.5 Z" fill="#d8d040" stroke="#302800" stroke-width="0.7"/><path d="M0.5 6.5 L1.8 3.3 L7.8 3.3 L6.4 6.5 Z" fill="#f0e850" stroke="#302800" stroke-width="0.6"/></svg>
<div class="t " style="left:486.3px;top:394.3px;">Import lookup list values</div>
<div class="hdr" style="left:396.3px;top:410.3px;width:249px;height:11.3px;"><i>New attribute</i></div>
<div class="" style="left:397px;top:422px;width:248.6px;height:21.8px;border:1px solid;border-color:#d4d0c8 #8a8880 #8a8880 #8a8880;"></div>
<div class="" style="left:398px;top:443.8px;width:247px;height:1px;background:#f1f0ed;"></div>
<div class="t " style="left:402.8px;top:427.8px;">Name:</div>
<div class="sunkw inp" style="left:425px;top:426.6px;width:94.5px;height:12.5px;padding-left:0.7px;"><i>DiameterGroup</i></div>
<div class="t " style="left:524.6px;top:427.8px;">Label:</div>
<div class="sunkw inp" style="left:546px;top:426.6px;width:94.5px;height:12.5px;padding-left:0.7px;"><i>Tloušťková třída</i></div>
<div class="btn" style="left:437px;top:448.2px;width:83.2px;height:16.8px;"></div>
<div class="btn" style="left:522px;top:448.2px;width:83.2px;height:16.8px;"></div>
<svg style="left:446px;top:453.6px" width="7" height="6.6" viewBox="0 0 7 6.6"><rect x="0" y="0" width="7" height="6.6" fill="#e8e8e8"/><rect x="0.2" y="0.8" width="2" height="5.6" fill="#1828c0"/><rect x="2.4" y="2.6" width="2.2" height="2.6" fill="#e01010"/><rect x="2.4" y="5" width="2.2" height="1.5" fill="#e0d020"/><rect x="4.8" y="0.2" width="2" height="6.2" fill="#1828c0"/></svg>
<svg style="left:534.6px;top:453px" width="6" height="8" viewBox="0 0 6 8"><path d="M2.2 0.4 L5.4 0.4 L3.6 3 L5.2 3 L1.6 7.6 L2.4 4.4 L0.8 4.4 Z" fill="#f0e820" stroke="#403800" stroke-width="0.7"/></svg>
<div class="t " style="left:459px;top:452.1px;">Show histogram</div>
<div class="t " style="left:546.3px;top:452.1px;font-weight:bold;color:#000;transform:scaleX(.94);">Perform task</div>
<div class="" style="left:0px;top:471px;width:650px;height:3px;background:#e9e7e3;"></div>
<div class="" style="left:0px;top:474px;width:650px;height:1px;background:#a3a098;"></div>
<div class="" style="left:0px;top:486px;width:650px;height:1px;background:#f4f3f0;"></div>
<div class="" style="left:203.5px;top:475px;width:1px;height:11px;background:#e4e2dd;"></div>
<div class="" style="left:204.5px;top:475px;width:1px;height:11px;background:#fbfaf9;"></div>
<div class="" style="left:205.5px;top:475px;width:1px;height:11px;background:#c4c1b9;"></div>
<div class="t " style="left:4.6px;top:475.3px;">READY</div>
</div></body></html>
